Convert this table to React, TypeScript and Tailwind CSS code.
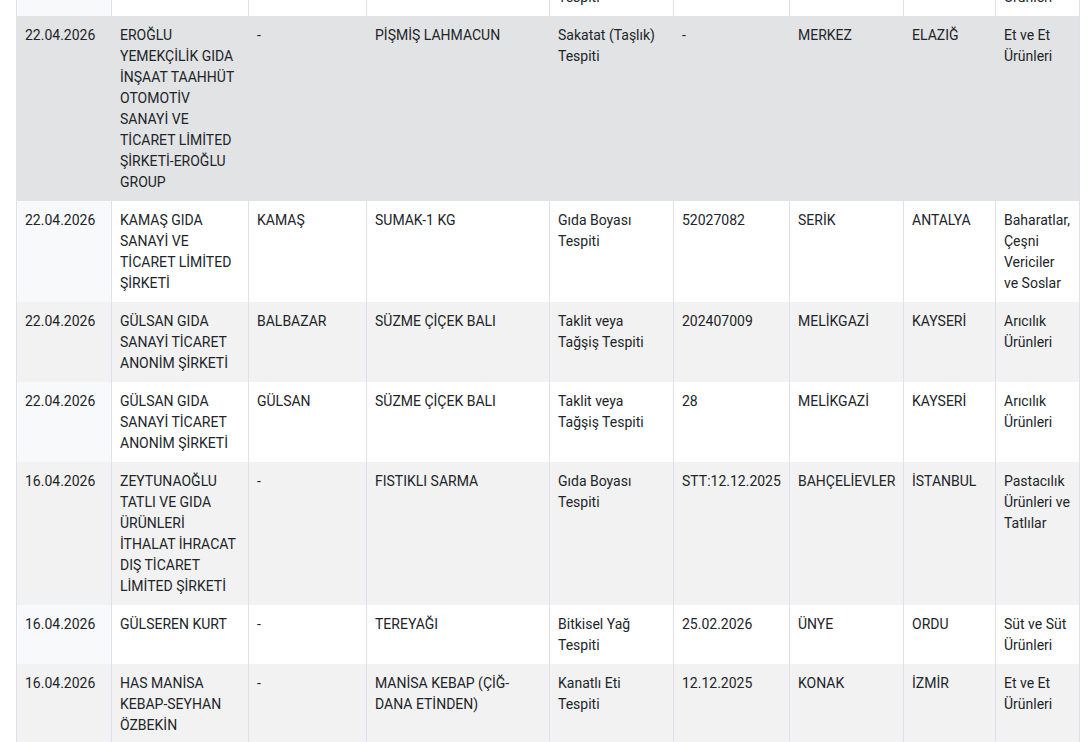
import React from "react";

type Row = {
  date: string;
  company: string;
  brand: string;
  product: string;
  violation: string;
  batch: string;
  district: string;
  city: string;
  category: string;
};

const rows: Row[] = [
  {
    date: "22.04.2026",
    company: "SAHİN GIDA",
    brand: "-",
    product: "SUCUK",
    violation: "Sakatat (Taşlık) Tespiti",
    batch: "-",
    district: "MERKEZ",
    city: "ELAZIĞ",
    category: "Et ve Et Ürünleri",
  },
  {
    date: "22.04.2026",
    company: "EROĞLU YEMEKÇİLİK GIDA İNŞAAT TAAHHÜT OTOMOTİV SANAYİ VE TİCARET LİMİTED ŞİRKETİ-EROĞLU GROUP",
    brand: "-",
    product: "PİŞMİŞ LAHMACUN",
    violation: "Sakatat (Taşlık) Tespiti",
    batch: "-",
    district: "MERKEZ",
    city: "ELAZIĞ",
    category: "Et ve Et Ürünleri",
  },
  {
    date: "22.04.2026",
    company: "KAMAŞ GIDA SANAYİ VE TİCARET LİMİTED ŞİRKETİ",
    brand: "KAMAŞ",
    product: "SUMAK-1 KG",
    violation: "Gıda Boyası Tespiti",
    batch: "52027082",
    district: "SERİK",
    city: "ANTALYA",
    category: "Baharatlar, Çeşni Vericiler ve Soslar",
  },
  {
    date: "22.04.2026",
    company: "GÜLSAN GIDA SANAYİ TİCARET ANONİM ŞİRKETİ",
    brand: "BALBAZAR",
    product: "SÜZME ÇİÇEK BALI",
    violation: "Taklit veya Tağşiş Tespiti",
    batch: "202407009",
    district: "MELİKGAZİ",
    city: "KAYSERİ",
    category: "Arıcılık Ürünleri",
  },
  {
    date: "22.04.2026",
    company: "GÜLSAN GIDA SANAYİ TİCARET ANONİM ŞİRKETİ",
    brand: "GÜLSAN",
    product: "SÜZME ÇİÇEK BALI",
    violation: "Taklit veya Tağşiş Tespiti",
    batch: "28",
    district: "MELİKGAZİ",
    city: "KAYSERİ",
    category: "Arıcılık Ürünleri",
  },
  {
    date: "16.04.2026",
    company: "ZEYTUNAOĞLU TATLI VE GIDA ÜRÜNLERİ İTHALAT İHRACAT DIŞ TİCARET LİMİTED ŞİRKETİ",
    brand: "-",
    product: "FISTIKLI SARMA",
    violation: "Gıda Boyası Tespiti",
    batch: "STT:12.12.2025",
    district: "BAHÇELİEVLER",
    city: "İSTANBUL",
    category: "Pastacılık Ürünleri ve Tatlılar",
  },
  {
    date: "16.04.2026",
    company: "GÜLSEREN KURT",
    brand: "-",
    product: "TEREYAĞI",
    violation: "Bitkisel Yağ Tespiti",
    batch: "25.02.2026",
    district: "ÜNYE",
    city: "ORDU",
    category: "Süt ve Süt Ürünleri",
  },
  {
    date: "16.04.2026",
    company: "HAS MANİSA KEBAP-SEYHAN ÖZBEKİN",
    brand: "-",
    product: "MANİSA KEBAP (ÇİĞ-DANA ETİNDEN)",
    violation: "Kanatlı Eti Tespiti",
    batch: "12.12.2025",
    district: "KONAK",
    city: "İZMİR",
    category: "Et ve Et Ürünleri",
  },
];

const cellCls = "border-l border-[#dee2e6] px-2 pt-[9px] pb-2 whitespace-normal";

function TableRow({ row, index }: { row: Row; index: number }) {
  const striped = index % 2 === 0;
  const hovered = index === 1;
  const rowBg = hovered ? "bg-[#e2e3e5]" : striped ? "bg-white" : "bg-[#f2f2f2]";
  const dateBg = hovered ? "" : striped ? "bg-[#f8f9fa]" : "";
  const border = hovered ? "border-transparent" : "";

  return (
    <div
      className={`grid grid-cols-[95px_137px_118px_183px_124px_116px_114px_92px_84px] border-r border-[#dee2e6] ${rowBg}`}
    >
      <div className={`${cellCls} ${dateBg} ${border}`}>{row.date}</div>
      <div className={`${cellCls} ${border}`}>{row.company}</div>
      <div className={`${cellCls} ${border}`}>{row.brand}</div>
      <div className={`${cellCls} ${border}`}>{row.product}</div>
      <div className={`${cellCls} ${border}`}>{row.violation}</div>
      <div className={`${cellCls} ${border}`}>{row.batch}</div>
      <div className={`${cellCls} ${border}`}>{row.district}</div>
      <div className={`${cellCls} ${border}`}>{row.city}</div>
      <div className={`${cellCls} ${border}`}>{row.category}</div>
    </div>
  );
}

export default function App() {
  return (
    <div className="h-[742px] overflow-hidden bg-white pl-4 font-['Roboto',sans-serif] text-[14px] leading-[21px] text-[#212529]">
      <div className="-mt-[43px] w-[1064px]">
        {rows.map((row, i) => (
          <TableRow key={i} row={row} index={i} />
        ))}
      </div>
    </div>
  );
}
